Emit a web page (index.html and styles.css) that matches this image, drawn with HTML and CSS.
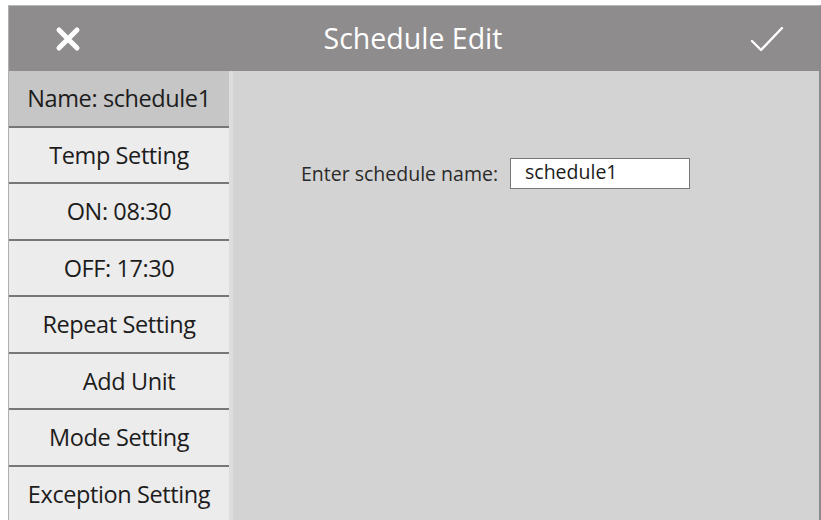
FILE: index.html
```html
<!DOCTYPE html>
<html lang="en">
<head>
  <meta charset="UTF-8">
  <meta name="viewport" content="width=device-width, initial-scale=1.0">
  <title>Schedule Edit</title>
  <link rel="stylesheet" href="styles.css">
</head>
<body>

  <div class="screen">
    <div class="header">
      <a href="#" class="header-btn close">
        <svg width="26" height="26" viewBox="0 0 26 26">
          <path d="M4 4 L22 22 M22 4 L4 22" stroke="#fff" stroke-width="5" stroke-linecap="round"/>
        </svg>
      </a>
      <div class="title">Schedule Edit</div>
      <a href="#" class="header-btn ok">
        <svg width="36" height="30" viewBox="0 0 36 30">
          <path d="M3 17 L12 26 L33 4" stroke="#fff" stroke-width="2.4" fill="none" stroke-linecap="round" stroke-linejoin="round"/>
        </svg>
      </a>
    </div>

    <div class="content">
      <div class="sidebar">
        <div class="item active">Name: schedule1</div>
        <div class="item">Temp Setting</div>
        <div class="item">ON: 08:30</div>
        <div class="item">OFF: 17:30</div>
        <div class="item">Repeat Setting</div>
        <div class="item shift">Add Unit</div>
        <div class="item">Mode Setting</div>
        <div class="item">Exception Setting</div>
      </div>

      <div class="main">
        <div class="field">
          <label for="name">Enter schedule name:</label>
          <input id="name" type="text" value="schedule1">
        </div>
      </div>
    </div>
  </div>

</body>
</html>
```

FILE: styles.css
```css
body {
  margin: 0;
  background: #fff;
  font-family: "Open Sans", "Noto Sans", sans-serif;
  overflow: hidden;
}
.screen {
  margin: 5px 0 0 8px;
  width: 810px;
  height: 515px;
  border-top: 1px solid #b8b8b8;
  border-left: 1px solid #b0b0b0;
  border-right: 2px solid #8a8a8a;
  display: flex;
  flex-direction: column;
}
.header {
  height: 65px;
  background: #8f8c8d;
  display: flex;
  align-items: center;
  justify-content: space-between;
  padding: 0 34px 0 46px;
  flex-shrink: 0;
}
.header-btn {
  display: flex;
  align-items: center;
}
.title {
  color: #fff;
  font-size: 28.5px;
  margin-left: -4px;
  margin-top: -1px;
}
.content {
  flex: 1;
  display: flex;
  background: #d3d3d3;
  overflow: hidden;
}
.sidebar {
  width: 220px;
  flex-shrink: 0;
  border-right: 4px solid #dddddd;
}
.item {
  box-sizing: border-box;
  height: 56.5px;
  background: #ececec;
  border-bottom: 2px solid #777;
  display: flex;
  align-items: center;
  justify-content: center;
  font-size: 23.5px;
  color: #1c1c1c;
  letter-spacing: -0.4px;
}
.item.active {
  background: #c6c6c6;
}
.item.shift {
  padding-left: 20px;
}
.main {
  flex: 1;
  padding-top: 87px;
  padding-left: 68px;
}
.field {
  display: flex;
  align-items: center;
}
.field label {
  font-size: 19.5px;
  color: #2a2a2a;
  margin-right: 12px;
}
.field input {
  width: 180px;
  height: 31px;
  box-sizing: border-box;
  border: 1px solid #777;
  background: #fff;
  font-family: inherit;
  font-size: 19.5px;
  color: #1c1c1c;
  padding: 0 0 4px 14px;
  outline: none;
}
```
